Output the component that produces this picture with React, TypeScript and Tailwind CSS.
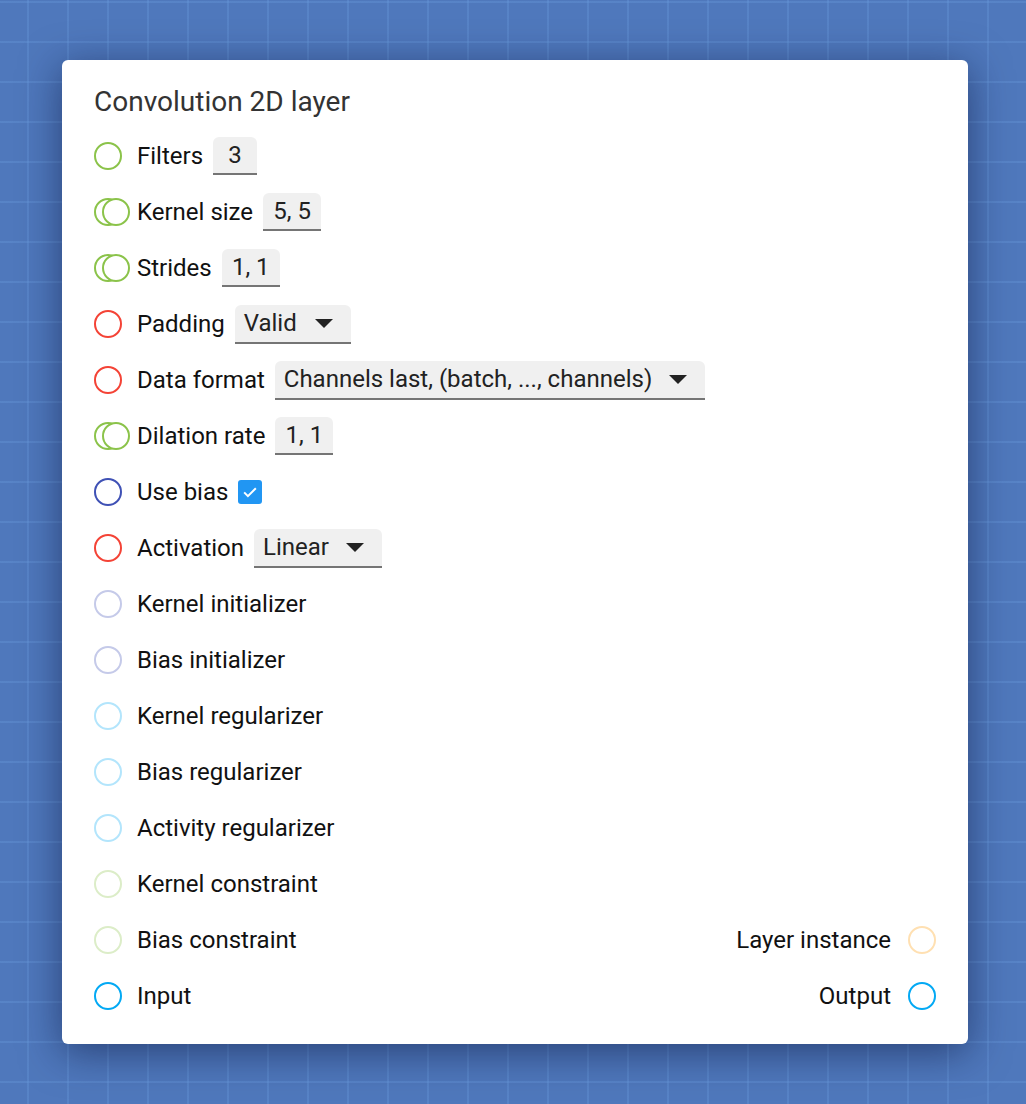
import React from 'react'

type Socket = 'single' | 'double'

interface Row {
    label: string;
    color: string;
    socket?: Socket;
    control?: React.ReactNode;
    right?: { label: string; color: string };
}

const Circle = ({ color, className = '' }: { color: string; className?: string }) => (
    <span className={`block h-7 w-7 rounded-full border-2 bg-white ${color} ${className}`} />
)

const Field = ({ value, width }: { value: string; width: string }) => (
    <div className={`flex h-[38px] ${width} items-center justify-center rounded-t-md border-b-2 border-[#757575] bg-[#f0f0f0] text-[24px] text-[#222]`}>
        {value}
    </div>
)

const Select = ({ value, width }: { value: string; width: string }) => (
    <div className={`flex h-[39px] ${width} items-center justify-between rounded-t-md border-b-2 border-[#757575] bg-[#f0f0f0] pl-[9px] pr-[18px] text-[24px] text-[#222]`}>
        <span>{value}</span>
        <svg width="18" height="9" viewBox="0 0 18 9">
            <path d="M0 0 L18 0 L9 9 Z" fill="#222" />
        </svg>
    </div>
)

const Checkbox = () => (
    <div className="flex h-6 w-6 items-center justify-center rounded-[3px] bg-[#2196f3]">
        <svg width="20" height="20" viewBox="0 0 24 24" fill="none">
            <path d="M5 12.5 L9.5 17 L19 7.5" stroke="white" strokeWidth="2.4" />
        </svg>
    </div>
)

const rows: Row[] = [
    { label: 'Filters', color: 'border-[#8bc34a]', control: <Field value="3" width="w-[44px]" /> },
    { label: 'Kernel size', color: 'border-[#8bc34a]', socket: 'double', control: <Field value="5, 5" width="w-[58px]" /> },
    { label: 'Strides', color: 'border-[#8bc34a]', socket: 'double', control: <Field value="1, 1" width="w-[58px]" /> },
    { label: 'Padding', color: 'border-[#f44336]', control: <Select value="Valid" width="w-[116px]" /> },
    { label: 'Data format', color: 'border-[#f44336]', control: <Select value="Channels last, (batch, ..., channels)" width="w-[430px]" /> },
    { label: 'Dilation rate', color: 'border-[#8bc34a]', socket: 'double', control: <Field value="1, 1" width="w-[58px]" /> },
    { label: 'Use bias', color: 'border-[#3f51b5]', control: <Checkbox /> },
    { label: 'Activation', color: 'border-[#f44336]', control: <Select value="Linear" width="w-[128px]" /> },
    { label: 'Kernel initializer', color: 'border-[#c5cae9]' },
    { label: 'Bias initializer', color: 'border-[#c5cae9]' },
    { label: 'Kernel regularizer', color: 'border-[#b3e5fc]' },
    { label: 'Bias regularizer', color: 'border-[#b3e5fc]' },
    { label: 'Activity regularizer', color: 'border-[#b3e5fc]' },
    { label: 'Kernel constraint', color: 'border-[#dcedc8]' },
    { label: 'Bias constraint', color: 'border-[#dcedc8]', right: { label: 'Layer instance', color: 'border-[#ffe0b2]' } },
    { label: 'Input', color: 'border-[#03a9f4]', right: { label: 'Output', color: 'border-[#03a9f4]' } },
]

export default function App() {
    return (
        <div
            className="h-[1104px] w-full overflow-hidden bg-[#4f78bc] bg-[linear-gradient(to_right,rgba(110,160,225,0.28)_2px,transparent_2px),linear-gradient(to_bottom,rgba(110,160,225,0.28)_2px,transparent_2px)] bg-[size:40px_40px] bg-[position:27px_1px] pl-[62px] pt-[60px]"
            style={{ fontFamily: 'Roboto, "Noto Sans", sans-serif' }}
        >
            <div className="flex h-[984px] w-[906px] flex-col rounded-md bg-white px-[32px] pb-[20px] pt-[24px] shadow-[0_8px_40px_rgba(10,20,60,0.55)]">
                <h1 className="mb-[8px] pl-[-1px] text-[28px] leading-[36px] text-[#333]">Convolution 2D layer</h1>

                {rows.map((row) => (
                    <div key={row.label} className="flex h-14 items-center text-[24px] text-[#111]">
                        <div className="relative h-7 w-[43px] shrink-0">
                            <Circle color={row.color} className="absolute left-0 top-0" />
                            {row.socket === 'double' && (
                                <Circle color={row.color} className="absolute left-[8px] top-0" />
                            )}
                        </div>
                        <span className="mr-[10px]">{row.label}</span>
                        {row.control}

                        {row.right && (
                            <div className="ml-auto flex items-center">
                                <span className="mr-[17px]">{row.right.label}</span>
                                <Circle color={row.right.color} />
                            </div>
                        )}
                    </div>
                ))}
            </div>
        </div>
    )
}
